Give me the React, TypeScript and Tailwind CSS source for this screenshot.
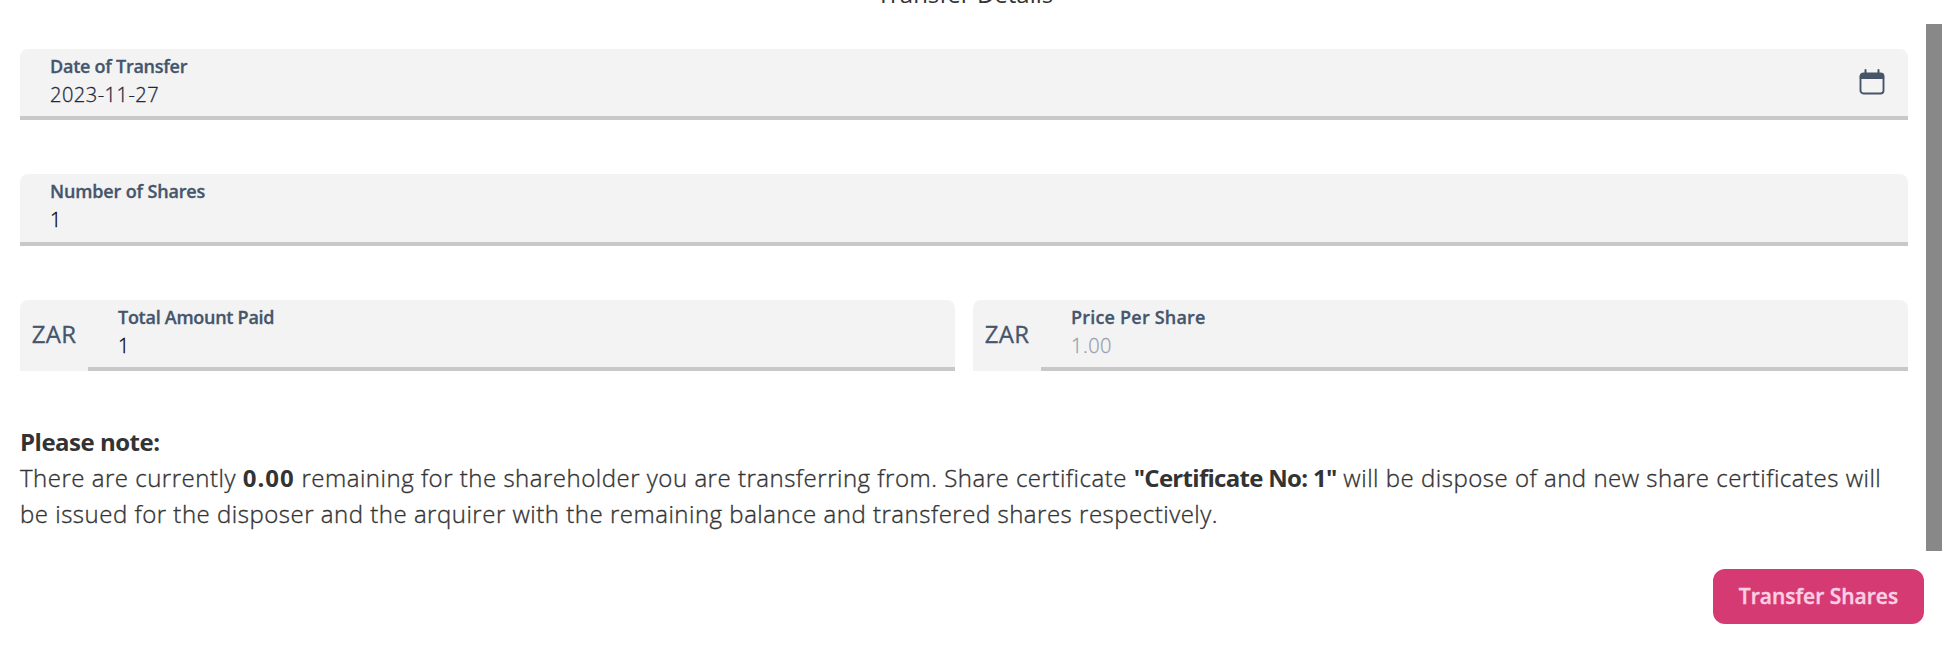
import React from "react";

const CalendarIcon: React.FC = () => (
  <svg className="mb-0.5" width="26" height="26" viewBox="0 0 26 26" fill="none" aria-hidden="true">
    <path
      d="M6.5 1v4M19.5 1v4"
      stroke="#475569"
      strokeWidth="2"
      strokeLinecap="round"
    />
    <rect x="1.5" y="4.5" width="23" height="20" rx="3" stroke="#475569" strokeWidth="1.9" />
    <path d="M.8 7.3a3.4 3.4 0 0 1 3.4-3.4h17.6a3.4 3.4 0 0 1 3.4 3.4V10H.8z" fill="#475569" />
  </svg>
);

interface FieldProps {
  label: string;
  labelClass?: string;
  value: string;
  valueClass?: string;
  prefix?: string;
  height?: string;
  icon?: React.ReactNode;
}

const Field: React.FC<FieldProps> = ({
  label,
  labelClass = "",
  value,
  valueClass = "text-black",
  prefix,
  height = "h-[71px]",
  icon,
}) => (
  <div className={`flex flex-1 bg-[#f3f3f3] rounded-t-lg overflow-hidden ${height}`}>
    {prefix && (
      <div className="w-[68px] flex items-center justify-center pb-[3px] text-2xl tracking-[0.2px] text-slate-600 [-webkit-text-stroke:0.3px]">
        {prefix}
      </div>
    )}
    <div className="flex-1 flex items-center justify-between border-b-4 border-[#c8c8c8] pl-[30px] pr-[23px]">
      <div className="self-start pt-[3px]">
        <div
          className={`text-lg leading-7 font-semibold text-slate-600 [-webkit-text-stroke:0.3px] ${labelClass}`}
        >
          {label}
        </div>
        <div
          className={`text-xl leading-7 pt-px tracking-[0.5px] font-light [-webkit-text-stroke:0.3px] ${valueClass}`}
        >
          {value}
        </div>
      </div>
      {icon}
    </div>
  </div>
);

export default function App() {
  return (
    <div className="h-[656px] bg-white overflow-hidden font-['Open_Sans',sans-serif] text-[#333333]">
      {/* Heading, scrolled mostly out of view */}
      <div className="h-6 flex items-end justify-center pb-3.5 pr-7 overflow-hidden">
        <h1 className="text-2xl font-normal leading-8">Transfer Details</h1>
      </div>

      {/* Scrollable form */}
      <div className="h-[527px] flex pl-5 pr-4">
        <div className="w-[1888px] pt-[25px]">
          <div className="flex">
            <Field
              label="Date of Transfer"
              labelClass="tracking-[-0.25px]"
              value="2023-11-27"
              valueClass="text-slate-800"
              icon={<CalendarIcon />}
            />
          </div>
          <div className="flex mt-[54px]">
            <Field label="Number of Shares" labelClass="tracking-[-0.15px]" value="1" height="h-[72px]" />
          </div>
          <div className="flex gap-[18px] mt-[54px]">
            <Field label="Total Amount Paid" labelClass="tracking-[-0.27px]" value="1" prefix="ZAR" />
            <Field
              label="Price Per Share"
              labelClass="tracking-[0.2px]"
              value="1.00"
              valueClass="text-gray-400"
              prefix="ZAR"
            />
          </div>

          {/* Note */}
          <div className="mt-[53px] text-2xl leading-9">
            <p className="font-bold tracking-[-0.5px]">Please note:</p>
            <p className="font-light tracking-[0.51px] [-webkit-text-stroke:0.35px]">
              There are currently <b className="font-bold tracking-[1px] [-webkit-text-stroke:0]">0.00</b>{" "}
              remaining for the shareholder you are transferring from. Share certificate{" "}
              <b className="font-bold tracking-[-0.7px] [-webkit-text-stroke:0]">"Certificate No: 1"</b>{" "}
              will be dispose of and new share certificates will be issued for the disposer and the
              arquirer with the remaining balance and transfered shares respectively.
            </p>
          </div>
        </div>
        <div className="ml-[18px] w-4 bg-[#888888]" />
      </div>

      {/* Footer */}
      <div className="flex justify-end pt-[18px] pr-[34px]">
        <button className="w-[211px] h-[55px] rounded-xl bg-[#d63a73] text-[21px] font-semibold text-[#fbcfe3] [-webkit-text-stroke:0.4px]">
          Transfer Shares
        </button>
      </div>
    </div>
  );
}
